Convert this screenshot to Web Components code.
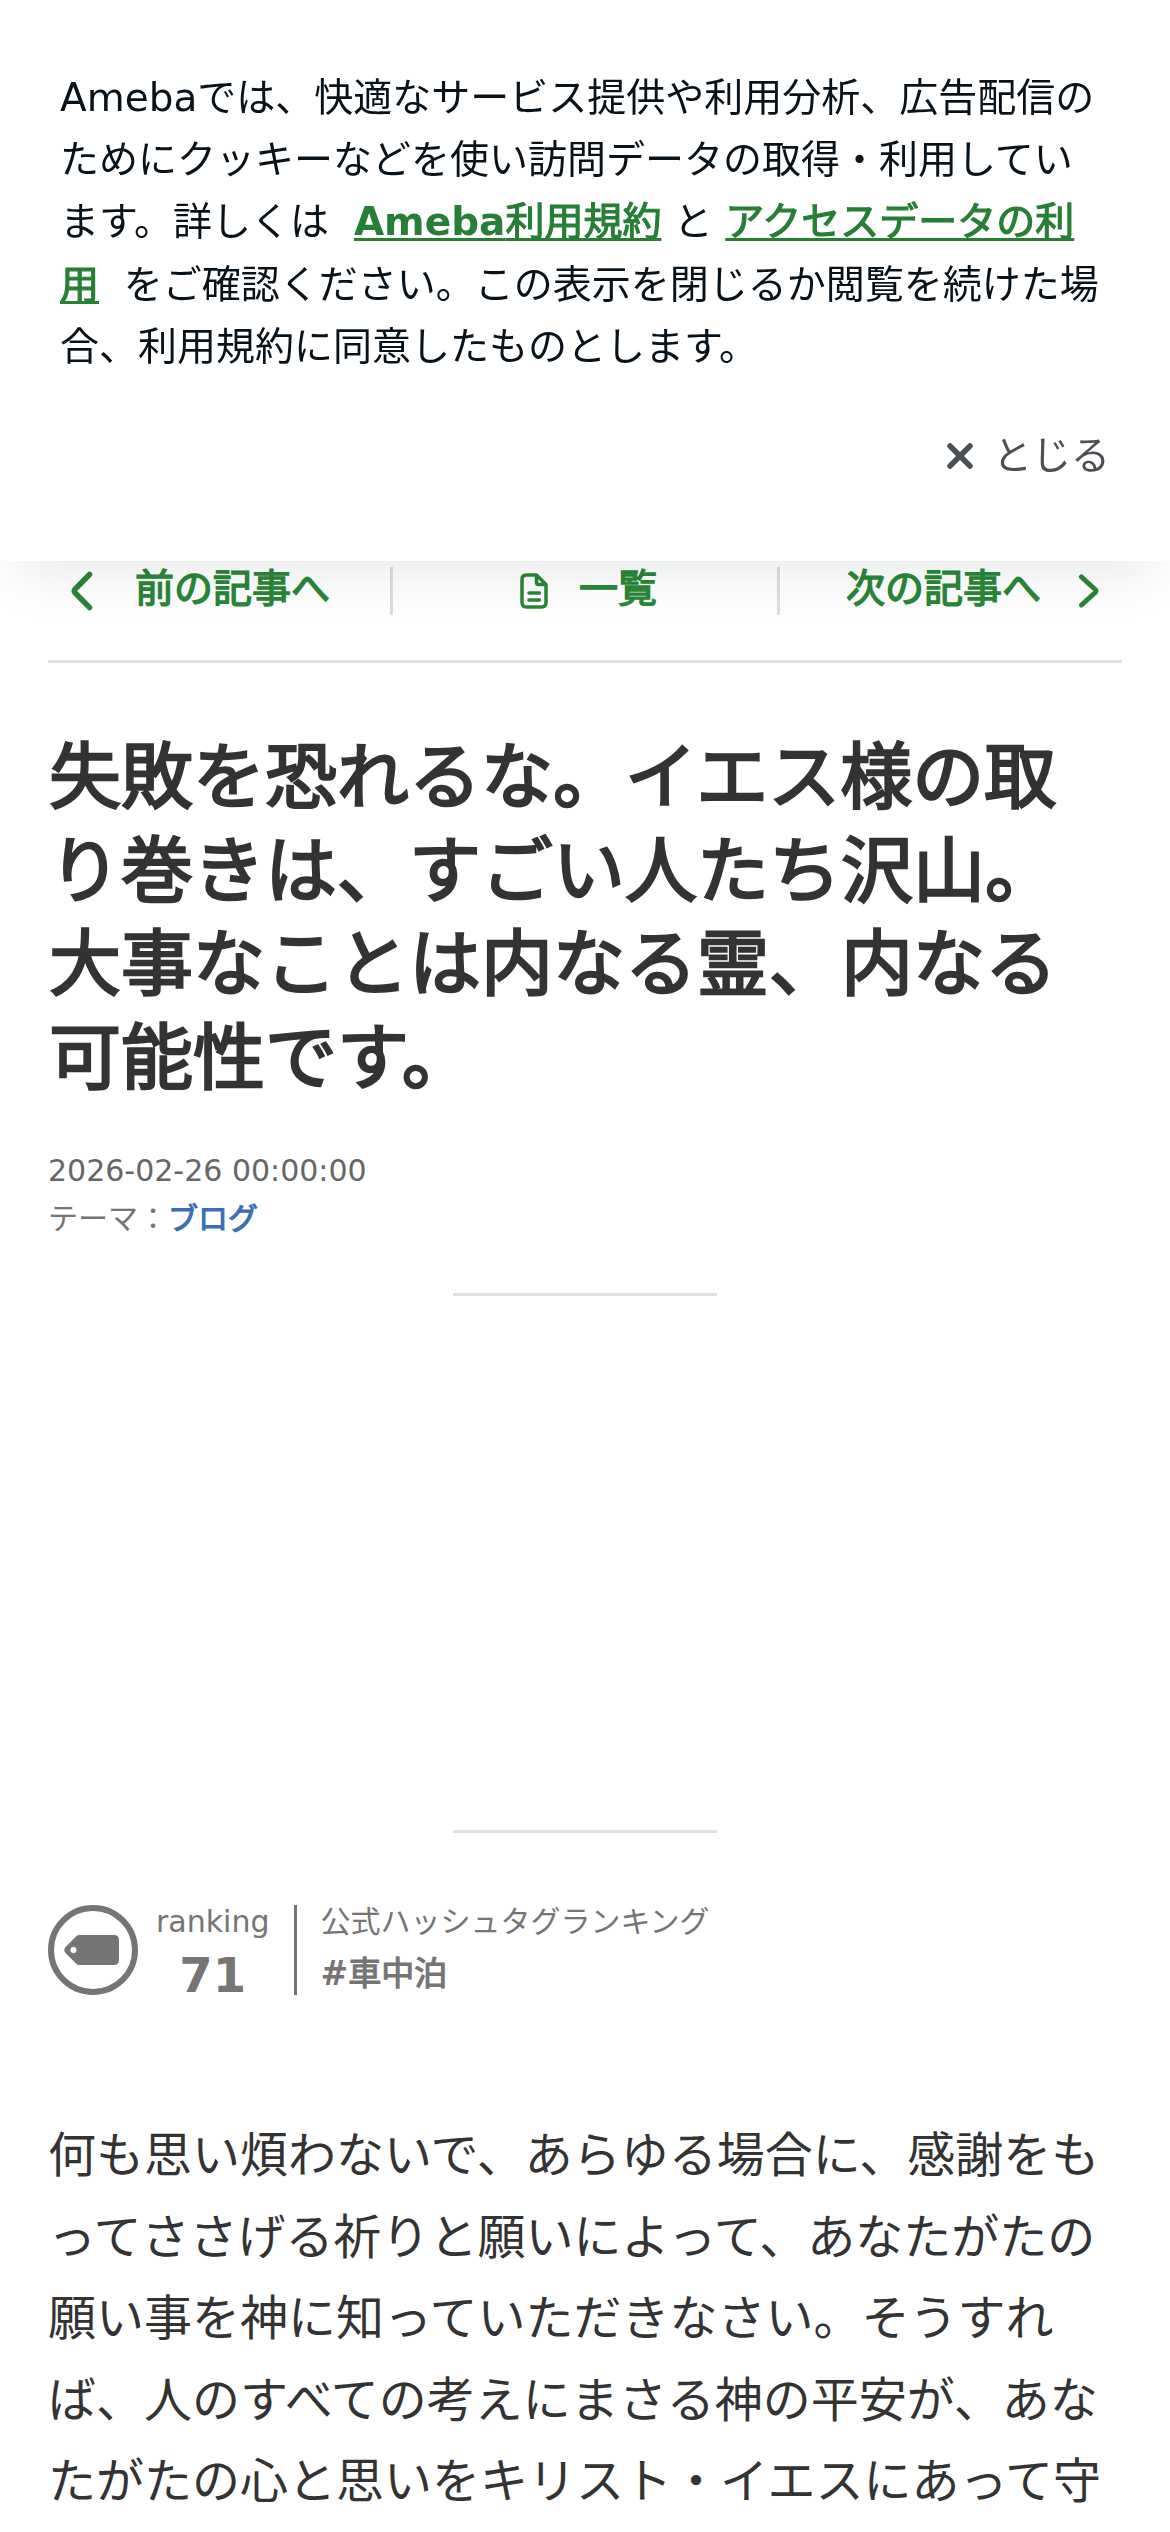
<!DOCTYPE html>
<html lang="ja">
<head>
<meta charset="utf-8">
<title>失敗を恐れるな。</title>
<style>
    html, body {
        margin: 0;
        padding: 0;
    }
    body {
        background: #fff;
        color: #333;
        font-family: "DejaVu Sans", "Noto Sans CJK JP", sans-serif;
        height: 2532px;
        overflow: hidden;
    }
</style>
</head>
<body>
<cookie-notice>
    Amebaでは、快適なサービス提供や利用分析、広告配信のためにクッキーなどを使い訪問データの取得・利用しています。詳しくは&nbsp; <a href="#"><b>Ameba</b>利用規約</a> と <a href="#">アクセスデータの利用</a> &nbsp;をご確認ください。この表示を閉じるか閲覧を続けた場合、利用規約に同意したものとします。
    <span slot="close">とじる</span>
</cookie-notice>
<blog-entry>
    <entry-pager slot="pager">
        <span slot="prev">前の記事へ</span>
        <span slot="list">一覧</span>
        <span slot="next">次の記事へ</span>
    </entry-pager>
    <entry-header slot="header">
        <span slot="title">失敗を恐れるな。イエス様の取り巻きは、すごい人たち沢山。大事なことは内なる霊、内なる可能性です。</span>
        <span slot="date">2026-02-26 00:00:00</span>
        <span slot="theme">ブログ</span>
    </entry-header>
    <ad-slot slot="ad"></ad-slot>
    <hashtag-ranking slot="ranking" rank="71">
        <span slot="label">公式ハッシュタグランキング</span>
        <span slot="tag">車中泊</span>
    </hashtag-ranking>
    何も思い煩わないで、あらゆる場合に、感謝をもってささげる祈りと願いによって、あなたがたの願い事を神に知っていただきなさい。そうすれば、人のすべての考えにまさる神の平安が、あなたがたの心と思いをキリスト・イエスにあって守
</blog-entry>

<script>
// Japanese text is emboldened with a thin stroke, Latin text uses the real bold
class CookieNotice extends HTMLElement {
    constructor() {
        super();
        this.attachShadow({ mode: 'open' });
        this.shadowRoot.innerHTML = `
            <style>
                :host {
                    display: block;
                    position: fixed;
                    top: 0;
                    left: 0;
                    right: 0;
                    z-index: 10;
                    box-sizing: border-box;
                    height: 561px;
                    padding: 66.500px 60px 0;
                    background: #fff;
                    color: #08121a;
                    font-size: 39px;
                    line-height: 62.4px;
                    box-shadow: 0 30px 48px -15px rgba(8, 18, 26, 0.09);
                }
                ::slotted(a) {
                    color: #267f34;
                    -webkit-text-stroke: 1.2px;
                    text-decoration-thickness: 3px;
                    text-underline-offset: 3px;
                }
                p { margin: 0; }
                .close {
                    display: flex;
                    justify-content: flex-end;
                    align-items: center;
                    gap: 19px;
                    margin-top: 46px;
                    color: #4b5055;
                }
                svg { width: 28px; height: 28px; }
            </style>
            <p><slot></slot></p>
            <div class="close">
                <svg viewBox="0 0 28 28" fill="none" stroke="currentColor" stroke-width="5.500" stroke-linecap="round">
                    <path d="M4 4l20 20M24 4L4 24"/>
                </svg>
                <slot name="close"></slot>
            </div>
        `;
        this.querySelectorAll('a b').forEach(b => b.style.webkitTextStroke = '0');
    }
}

class BlogEntry extends HTMLElement {
    constructor() {
        super();
        this.attachShadow({ mode: 'open' });
        this.shadowRoot.innerHTML = `
            <style>
                :host {
                    display: block;
                    padding: 537px 48px 0;
                }
                .body {
                    margin-top: 120px;
                    font-size: 48px;
                    line-height: 81.6px;
                }
            </style>
            <slot name="pager"></slot>
            <slot name="header"></slot>
            <slot name="ad"></slot>
            <slot name="ranking"></slot>
            <div class="body"><slot></slot></div>
        `;
    }
}

class EntryPager extends HTMLElement {
    constructor() {
        super();
        this.attachShadow({ mode: 'open' });
        this.shadowRoot.innerHTML = `
            <style>
                :host {
                    display: grid;
                    grid-template-columns: 342px 390px 342px;
                    align-items: center;
                    height: 123px;
                    border-bottom: 3px solid #e0e0e0;
                    color: #298737;
                    font-size: 39px;
                    line-height: 48px;
                }
                div {
                    display: flex;
                    align-items: center;
                    box-sizing: border-box;
                    height: 48px;
                    margin-bottom: 15px;
                }
                .prev { padding-left: 21px; gap: 42px; }
                .list {
                    justify-content: center;
                    gap: 30px;
                    padding-left: 6px;
                    border: solid #ddd;
                    border-width: 0 3px;
                }
                .next { justify-content: flex-end; gap: 37px; padding-right: 22px; }
                .label { margin-top: -4px; -webkit-text-stroke: 1.4px; }
                path { fill: none; stroke: currentColor; stroke-linecap: round; stroke-linejoin: round; }
            </style>
            <div class="prev">
                <svg width="24" height="42" viewBox="0 0 24 42"><path stroke-width="5.500" d="M20.500 4.500L6 19.200q-1.500 1.800 0 3.600L20.500 37.500"/></svg>
                <span class="label"><slot name="prev"></slot></span>
            </div>
            <div class="list">
                <svg width="30" height="38" viewBox="0 0 30 38">
                    <path stroke-width="3.500" d="M17.500 3H7.500Q3 3 3 7.500V30.500Q3 35 7.500 35H22.500Q27 35 27 30.500V12.500L17.500 3V10.500Q17.500 12.500 19.500 12.500H27M10 21H20.500M10 28H20.500"/>
                </svg>
                <span class="label"><slot name="list"></slot></span>
            </div>
            <div class="next">
                <span class="label"><slot name="next"></slot></span>
                <svg width="22" height="36" viewBox="0 0 22 36"><path stroke-width="5" d="M3.500 4L17.200 16.500q1.300 1.500 0 3L3.500 32"/></svg>
            </div>
        `;
    }
}

class EntryHeader extends HTMLElement {
    constructor() {
        super();
        this.attachShadow({ mode: 'open' });
        this.shadowRoot.innerHTML = `
            <style>
                :host { display: block; margin-top: 68px; }
                h1 {
                    margin: 0 0 42px;
                    padding-left: 1px;
                    font-size: 72px;
                    font-weight: normal;
                    line-height: 93.6px;
                    -webkit-text-stroke: 2.4px;
                }
                p {
                    margin: 0;
                    color: #757575;
                    font-size: 30px;
                    line-height: 48px;
                }
                .date { color: #666; }
                ::slotted([slot="theme"]) {
                    color: #3970b5;
                    -webkit-text-stroke: 1.1px;
                }
            </style>
            <h1><slot name="title"></slot></h1>
            <p class="date"><slot name="date"></slot></p>
            <p>テーマ：<slot name="theme"></slot></p>
        `;
    }
}

class AdSlot extends HTMLElement {
    constructor() {
        super();
        this.attachShadow({ mode: 'open' });
        this.shadowRoot.innerHTML = `
            <style>
                :host {
                    display: block;
                    box-sizing: border-box;
                    width: 264px;
                    height: 540px;
                    margin: 49.600px auto 0;
                    border: solid #e0e0e0;
                    border-width: 3px 0;
                }
            </style>
        `;
    }
}

class HashtagRanking extends HTMLElement {
    constructor() {
        super();
        this.attachShadow({ mode: 'open' });
        this.shadowRoot.innerHTML = `
            <style>
                :host {
                    display: flex;
                    align-items: flex-start;
                    height: 90px;
                    margin-top: 72px;
                    color: #757575;
                    font-size: 30px;
                }
                .rank {
                    display: flex;
                    flex-direction: column;
                    align-items: center;
                    margin: -1px 0 0 18px;
                    padding-right: 24px;
                    line-height: 36px;
                }
                .rank b { margin-top: 7px; font-size: 48px; line-height: 56px; }
                .tag {
                    display: flex;
                    flex-direction: column;
                    box-sizing: border-box;
                    height: 90px;
                    padding-left: 24px;
                    border-left: 3px solid #757575;
                    line-height: 34px;
                }
                .tag div {
                    margin-top: 15px;
                    font-size: 33px;
                    line-height: 40px;
                }
                ::slotted([slot="tag"]) { -webkit-text-stroke: 1.2px; }
            </style>
            <svg width="90" height="90" viewBox="0 0 90 90">
                <circle cx="45" cy="45" r="42" fill="none" stroke="#757575" stroke-width="6"/>
                <path fill="#757575" d="M31 30H66Q71 30 71 35V55Q71 60 66 60H31Q29 60 27.500 58L17.500 48Q15 45 17.500 42L27.500 32Q29 30 31 30Z"/>
                <circle cx="25.500" cy="45" r="3" fill="#fff"/>
            </svg>
            <div class="rank"><span>ranking</span><b>${this.getAttribute('rank')}</b></div>
            <div class="tag"><slot name="label"></slot><div><b>#</b><slot name="tag"></slot></div></div>
        `;
    }
}

customElements.define('cookie-notice', CookieNotice);
customElements.define('blog-entry', BlogEntry);
customElements.define('entry-pager', EntryPager);
customElements.define('entry-header', EntryHeader);
customElements.define('ad-slot', AdSlot);
customElements.define('hashtag-ranking', HashtagRanking);
</script>
</body>
</html>
